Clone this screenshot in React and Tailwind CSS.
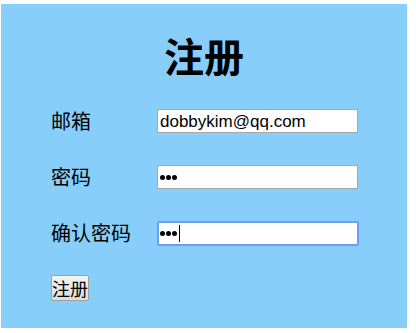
const cjk = { fontFamily: '"Noto Sans CJK SC", sans-serif' };

const Field = ({ label, type, value, focused }) => (
  <div className="flex items-center h-[24px]">
    <label className="w-[106px] text-[20px] leading-none text-black" style={cjk}>
      {label}
    </label>
    <div
      className={
        focused
          ? 'relative w-[202px] h-[25px] bg-white border-2 border-[#6d9ef2] rounded-[2px] flex items-center'
          : 'relative w-[201px] h-[24px] bg-white border border-[#a9a9a9] flex items-center'
      }
    >
      {type === 'password' ? (
        <span className={focused ? 'ml-[1px] flex items-center gap-[1px]' : 'ml-[2px] flex items-center gap-[1px]'}>
          {[0, 1, 2].map((i) => (
            <span key={i} className="w-[5px] h-[5px] rounded-full bg-black" />
          ))}
          {focused && <span className="ml-[1px] w-[1px] h-[17px] bg-black" />}
        </span>
      ) : (
        <span
          className="ml-[2px] text-[17px] leading-none text-black"
          style={{ fontFamily: '"Liberation Sans", Arial, sans-serif' }}
        >
          {value}
        </span>
      )}
    </div>
  </div>
);

const App = () => {
  return (
    <div className="w-[416px] h-[333px] bg-white pl-[1px] pt-[4px]">
      <div className="w-[406px] h-[324px] bg-[#87cefa] flex flex-col">
        <h1 className="mt-[31px] text-center text-[40px] font-bold leading-none text-black" style={cjk}>
          注册
        </h1>
        <form className="ml-[50px] mt-[34px] flex flex-col gap-[32px]">
          <Field label="邮箱" value="dobbykim@qq.com" />
          <Field label="密码" type="password" />
          <Field label="确认密码" type="password" focused />
        </form>
        <div className="ml-[50px] mt-[30px]">
          <button
            className="w-[38px] h-[26px] border border-[#a0a0a0] rounded-[2px] bg-gradient-to-b from-[#f4f4f4] to-[#dcdcdc] text-[18px] leading-none text-black flex items-center justify-center"
            style={cjk}
          >
            注册
          </button>
        </div>
      </div>
    </div>
  );
};

export default App;
